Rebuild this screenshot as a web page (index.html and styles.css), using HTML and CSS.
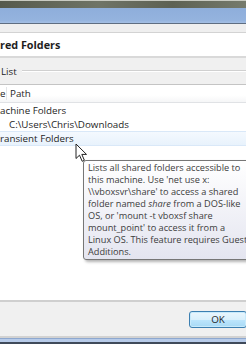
FILE: index.html
```html
<!DOCTYPE html>
<html lang="en">
<head>
    <meta charset="UTF-8">
    <meta name="viewport" content="width=device-width, initial-scale=1.0">
    <title>Shared Folders</title>
    <link rel="stylesheet" href="styles.css">
</head>
<body>
    <div class="window">
        <div class="frame-top">
            <div class="glass"></div>
            <div class="caption"></div>
        </div>
        <div class="strip"></div>

        <div class="page-head">
            <h1>red Folders</h1>
        </div>

        <div class="page-body">
            <div class="group-title">
                <span>List</span>
                <i class="rule"></i>
            </div>

            <div class="tree">
                <div class="tree-head">
                    <span class="col-name">e</span>
                    <span class="col-path">Path</span>
                </div>
                <div class="row">
                    <span class="item">achine Folders</span>
                </div>
                <div class="row">
                    <span class="col-name"></span>
                    <span class="col-path">C:\Users\Chris\Downloads</span>
                </div>
                <div class="row hover">
                    <span class="item">ransient Folders</span>
                </div>
            </div>
        </div>

        <div class="buttons">
            <button class="btn default">OK</button>
        </div>
        <div class="frame-bottom"></div>

        <!-- mouse pointer and the tooltip it opened -->
        <svg class="cursor" width="13" height="20" viewBox="0 0 13 20">
            <path d="M1 1 L1 15.5 L4.5 12.2 L7.2 18.3 L9.4 17.3 L6.8 11.4 L11.5 11.4 Z"
                  fill="#fff" stroke="#222" stroke-width="1" stroke-linejoin="round"/>
        </svg>
        <div class="tooltip">
            Lists all shared folders accessible to<br>
            this machine. Use 'net use x:<br>
            \\vboxsvr\share' to access a shared<br>
            folder named <em>share</em> from a DOS-like<br>
            OS, or 'mount -t vboxsf share<br>
            mount_point' to access it from a<br>
            Linux OS. This feature requires Guest<br>
            Additions.
        </div>
    </div>
</body>
</html>
```

FILE: styles.css
```css
:root {
    --face: #f0f0f0;
    --text: #1e1e1e;
}

html, body {
    margin: 0;
    height: 100%;
    overflow: hidden;
}

body {
    font-family: 'Open Sans', sans-serif;
    font-size: 9.8px;
    color: var(--text);
}

.window {
    position: relative;
    width: 246px;
    height: 344px;
    display: flex;
    flex-direction: column;
    background: var(--face);
    overflow: hidden;
}

/* Aero frame at the top */
.frame-top {
    height: 24px;
    display: flex;
    flex-direction: column;
    border-top: 1px solid #c9cbc2;
    box-sizing: border-box;
    border-bottom: 1px solid #5f6e82;
}

.glass {
    height: 7px;
    background: linear-gradient(90deg, #55594c, #6f7466 40%, #5d6152 70%, #767b6d);
}

.caption {
    flex: 1;
    background: linear-gradient(#8eaedb, #94b3de 80%, #a4bfe4);
}

.strip {
    height: 8px;
    background: #efefef;
}

.page-head {
    height: 23px;
    background: #fff;
    border-top: 1px solid #d3d3d3;
    border-bottom: 2px solid #d9d9d9;
    display: flex;
    align-items: center;
}

.page-head h1 {
    margin: 1px 0 0;
    font-size: 10.8px;
    font-weight: bold;
    line-height: 1;
}

.page-body {
    flex: 1;
    display: flex;
    flex-direction: column;
}

.group-title {
    height: 26px;
    display: flex;
    align-items: center;
    gap: 5px;
    padding-left: 1px;
}

.group-title .rule {
    flex: 1;
    height: 0;
    border-top: 1px solid #d0d0d0;
    border-bottom: 1px solid #fff;
}

.tree {
    flex: 1;
    background: #fff;
    border-top: 1px solid #c4c4c4;
    border-bottom: 2px solid #cfcfcf;
}

.tree-head {
    height: 17px;
    display: flex;
    align-items: center;
    background: linear-gradient(#fff, #fff 60%, #f5f6f7);
    border-bottom: 1px solid #e0e2e5;
}

.col-name {
    width: 6px;
    flex: none;
    overflow: hidden;
}

.tree-head .col-name {
    border-right: 1px solid #e3e5e8;
}

.col-path {
    padding-left: 3px;
    white-space: nowrap;
}

.row {
    height: 14px;
    display: flex;
    align-items: center;
    white-space: nowrap;
}

.row.hover {
    height: 15px;
    box-sizing: border-box;
    background: linear-gradient(#f4f9fe, #e8f2fc);
    border-top: 1px solid #d9e8f8;
    border-bottom: 1px solid #d9e8f8;
}

.buttons {
    height: 34px;
    display: flex;
    align-items: center;
    justify-content: flex-end;
}

.btn {
    font: inherit;
    color: var(--text);
    width: 58px;
    height: 17px;
    margin-right: -1px;
    padding: 0;
    border-radius: 3px;
    border: 1px solid #707070;
    background: linear-gradient(#f2f2f2, #ebebeb 50%, #dddddd 50%, #cfcfcf);
}

.btn.default {
    border-color: #3c7fb1;
    background: linear-gradient(#eaf6fd, #d9f0fc 50%, #bee6fd 50%, #a7d9f5);
    box-shadow: inset 0 0 0 1px #c8eafb;
}

.frame-bottom {
    height: 8px;
    box-sizing: border-box;
    border-top: 2px solid #d2d2d2;
    background: linear-gradient(#8ea8cf, #8ea8cf 1px, #b7cbe9 1px, #b7cbe9 4px, #3f4a5a 4px);
}

.cursor {
    position: absolute;
    left: 75px;
    top: 143px;
}

.tooltip {
    position: absolute;
    left: 83px;
    top: 160px;
    width: 190px;
    padding: 1px 4px;
    font-size: 9.2px;
    line-height: 12px;
    white-space: nowrap;
    color: #3c3c3c;
    border: 1px solid #767676;
    border-radius: 3px;
    background: linear-gradient(#ffffff, #e4e5f0);
    box-shadow: 2px 2px 3px rgba(0, 0, 0, 0.3);
}
```
